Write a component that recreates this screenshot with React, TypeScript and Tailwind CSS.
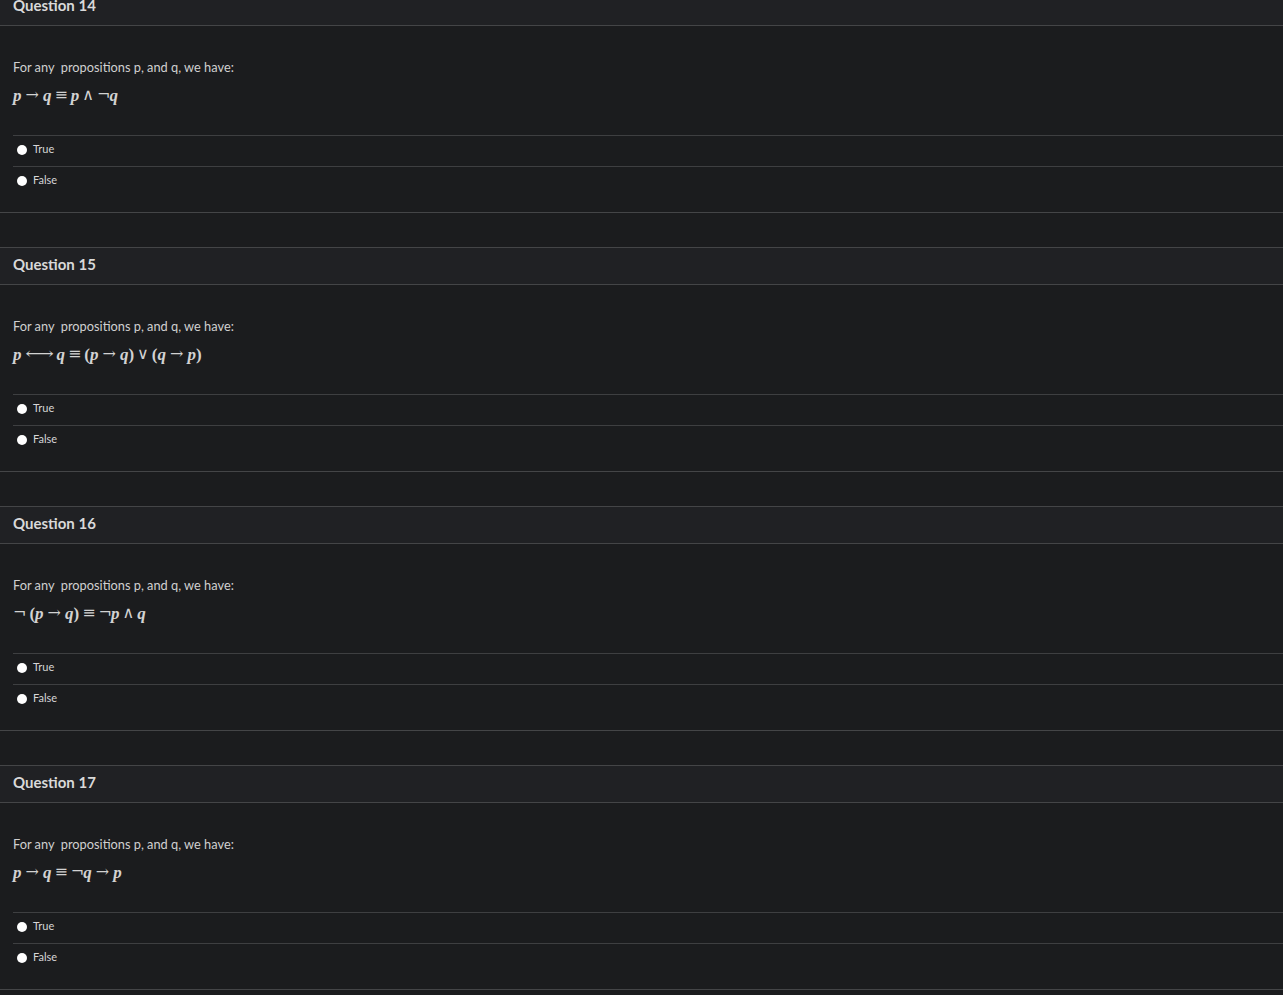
import React from "react";

type Tok = { t: string; k: "v" | "rel" | "eq" | "lr" | "bin" | "op" | "p" };

const v = (t: string): Tok => ({ t, k: "v" });
const rel = (t: string): Tok => ({ t, k: "rel" });
const eq: Tok = { t: "≡", k: "eq" };
const lr: Tok = { t: "⟷", k: "lr" };
const bin = (t: string): Tok => ({ t, k: "bin" });
const op = (t: string): Tok => ({ t, k: "op" });
const p = (t: string): Tok => ({ t, k: "p" });

const questions: { num: number; formula: Tok[] }[] = [
  { num: 14, formula: [v("p"), rel("→"), v("q"), eq, v("p"), bin("∧"), op("¬"), v("q")] },
  {
    num: 15,
    formula: [
      v("p"), lr, v("q"), eq, p("("), v("p"), rel("→"), v("q"), p(")"),
      bin("∨"), p("("), v("q"), rel("→"), v("p"), p(")"),
    ],
  },
  {
    num: 16,
    formula: [op("¬"), p("("), v("p"), rel("→"), v("q"), p(")"), eq, op("¬"), v("p"), bin("∧"), v("q")],
  },
  { num: 17, formula: [v("p"), rel("→"), v("q"), eq, op("¬"), v("q"), rel("→"), v("p")] },
];

const sym = { fontFamily: '"DejaVu Serif", serif' };

function Formula({ toks }: { toks: Tok[] }) {
  return (
    <div
      className="h-[20px] flex items-center text-[16px] text-[#d2d2d2] leading-none"
      style={{ fontFamily: '"Liberation Serif", "DejaVu Serif", serif' }}
    >
      {toks.map((tk, i) => {
        switch (tk.k) {
          case "v":
            return <span key={i} className="italic font-bold text-[17px]">{tk.t}</span>;
          case "rel":
            return <span key={i} className="mx-[4px]" style={sym}>{tk.t}</span>;
          case "eq":
            return <span key={i} className="mx-[3px]" style={sym}>{tk.t}</span>;
          case "lr":
            return (
              <span key={i} className="mx-[6px] inline-block scale-x-[1.25]" style={sym}>
                {tk.t}
              </span>
            );
          case "bin":
            return <span key={i} className="mx-[3px] text-[16px]" style={sym}>{tk.t}</span>;
          case "op":
            return (
              <span key={i} className={toks[i + 1]?.k === "p" ? "mr-[3px]" : "mr-[-1px]"} style={sym}>
                {tk.t}
              </span>
            );
          default:
            return <span key={i} className="font-bold text-[17px]">{tk.t}</span>;
        }
      })}
    </div>
  );
}

function Answer({ label }: { label: string }) {
  return (
    <li className="h-[31px] border-t border-[#3e3f41] flex items-center pb-[3px]">
      <span className="ml-[4px] w-[10px] h-[10px] rounded-full bg-white" />
      <span className="ml-[6px] text-[11px] text-[#d6d6d6]">{label}</span>
    </li>
  );
}

function Question({ num, formula, first }: { num: number; formula: Tok[]; first?: boolean }) {
  return (
    <div className={`border-t border-b border-[#444547] ${first ? "-mt-[12px]" : ""} mb-[34px]`}>
      <div className="h-[37px] bg-[#202124] border-b border-[#444547] px-[13px] pb-[3px] flex items-center">
        <h2 className="text-[15px] font-bold text-[#d9d9d9]">Question {num}</h2>
      </div>
      <div className="pt-[31px] pb-[15px]">
        <div className="px-[13px]">
          <p className="h-[20px] leading-[20px] text-[12.8px] text-[#d0d0d0]">
            For any&nbsp; propositions p, and q, we have:
          </p>
          <div className="mt-[8px]">
            <Formula toks={formula} />
          </div>
        </div>
        <ul className="mt-[30px] ml-[13px]">
          <Answer label="True" />
          <Answer label="False" />
        </ul>
      </div>
    </div>
  );
}

export default function App() {
  return (
    <div
      className="min-h-screen h-[995px] overflow-hidden bg-[#1b1c1e]"
      style={{ fontFamily: 'Lato, "Noto Sans", sans-serif' }}
    >
      {questions.map((q, i) => (
        <Question key={q.num} num={q.num} formula={q.formula} first={i === 0} />
      ))}
    </div>
  );
}
